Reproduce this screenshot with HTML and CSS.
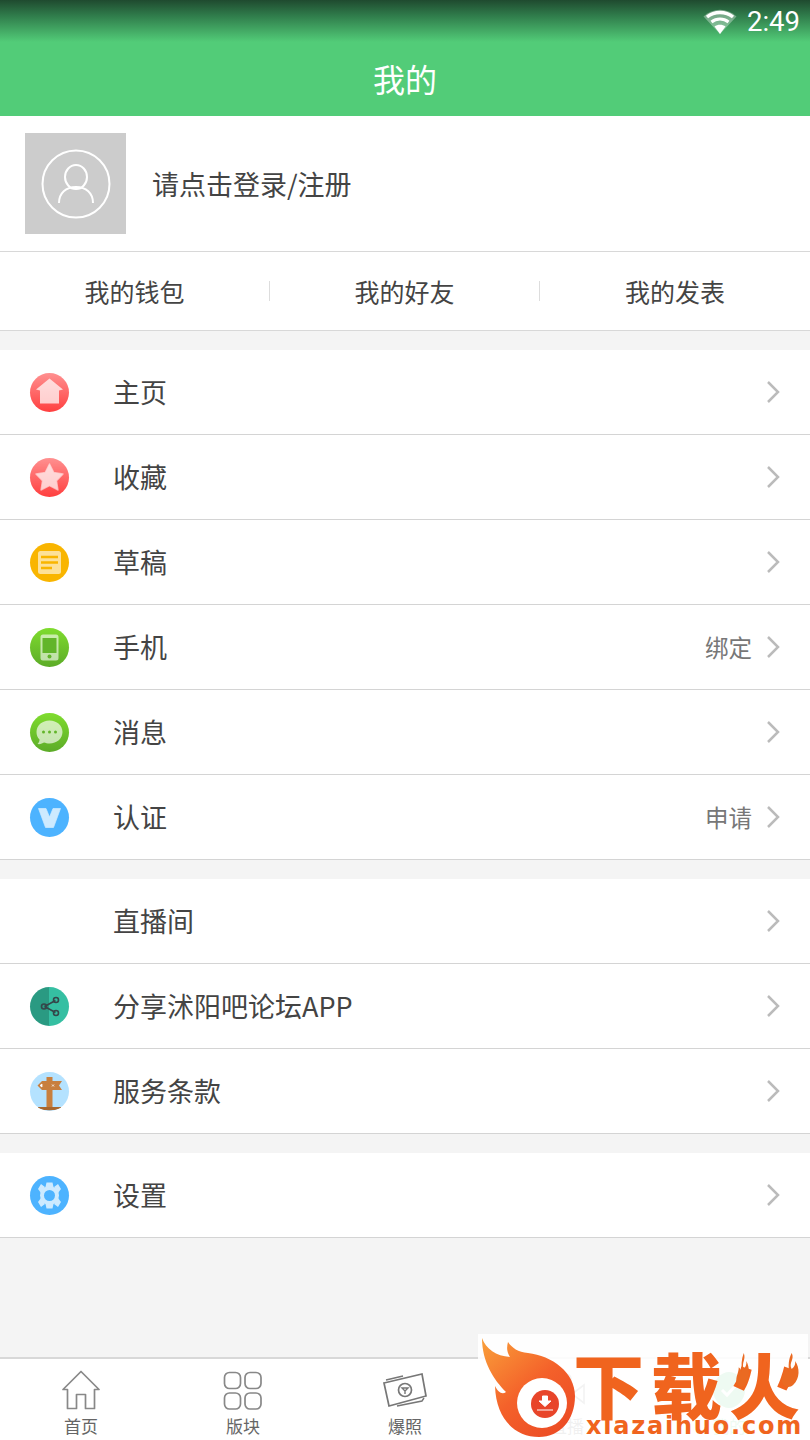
FILE: index.html
```html
<!DOCTYPE html>
<html lang="zh-CN">
<head>
    <meta charset="UTF-8">
    <meta name="viewport" content="width=device-width, initial-scale=1.0">
    <title>我的</title>
    <link rel="stylesheet" href="styles.css">
</head>
<body>
    <div class="app">
        <header class="header">
            <div class="status-bar">
                <svg class="wifi" width="34" height="26" viewBox="0 0 34 26">
                    <path d="M17 25 0.5 7.5C10-1.5 24-1.5 33.5 7.5Z" fill="#fff" opacity="0.35"/>
                    <path d="M4 8C11.500 2 22.500 2 30 8" fill="none" stroke="#fff" stroke-width="3.500"/>
                    <path d="M8.500 13C13.500 9 20.500 9 25.500 13" fill="none" stroke="#fff" stroke-width="3"/>
                    <path d="M17 25 11.500 17.500C14.500 15 19.500 15 22.500 17.500Z" fill="#fff"/>
                </svg>
                <span class="time">2:49</span>
            </div>
            <h1 class="title">我的</h1>
        </header>

        <section class="profile">
            <div class="avatar">
                <svg width="70" height="70" viewBox="0 0 70 70" fill="none" stroke="#fff" stroke-width="2">
                    <circle cx="35" cy="35" r="33.500"/>
                    <ellipse cx="35" cy="28" rx="11" ry="12"/>
                    <path d="M18 54C18 44 25 38 35 38S52 44 52 54"/>
                </svg>
            </div>
            <span class="login-text">请点击登录/注册</span>
        </section>

        <nav class="quick-links">
            <div class="quick-link">我的钱包</div>
            <div class="quick-link">我的好友</div>
            <div class="quick-link">我的发表</div>
        </nav>

        <ul class="menu">
            <li class="menu-row">
                <span class="menu-icon icon-red">
                    <svg width="39" height="39" viewBox="0 0 39 39"><path d="M19.500 5.500 33 16.500 29 17.500V30.500H10V17.500L6 16.500Z" fill="#fff" opacity="0.72"/></svg>
                </span>
                <span class="menu-label">主页</span>
                <svg class="chevron" width="14" height="24" viewBox="0 0 14 24"><path d="M2 2 12 12 2 22"/></svg>
            </li>
            <li class="menu-row">
                <span class="menu-icon icon-red">
                    <svg width="39" height="39" viewBox="0 0 39 39"><path d="M19.500 6 23.800 14.500 33 16 26.500 22.800 28 32 19.500 27.700 11 32 12.500 22.800 6 16 15.200 14.500Z" fill="#fff" opacity="0.72" stroke="#fff" stroke-width="1.500" stroke-linejoin="round" stroke-opacity="0.72"/></svg>
                </span>
                <span class="menu-label">收藏</span>
                <svg class="chevron" width="14" height="24" viewBox="0 0 14 24"><path d="M2 2 12 12 2 22"/></svg>
            </li>
            <li class="menu-row">
                <span class="menu-icon icon-yellow">
                    <svg width="39" height="39" viewBox="0 0 39 39"><rect x="8" y="8" width="23" height="23" rx="2.500" fill="#fff" opacity="0.6"/><path d="M11 14H28M11 19.500H28M11 25H22" stroke="#f9b500" stroke-width="2.500"/></svg>
                </span>
                <span class="menu-label">草稿</span>
                <svg class="chevron" width="14" height="24" viewBox="0 0 14 24"><path d="M2 2 12 12 2 22"/></svg>
            </li>
            <li class="menu-row">
                <span class="menu-icon icon-green">
                    <svg width="39" height="39" viewBox="0 0 39 39"><rect x="10.500" y="6.500" width="18" height="26" rx="2.500" fill="#fff" opacity="0.6"/><rect x="12.500" y="10" width="14" height="15" fill="#62b52a"/><circle cx="19.500" cy="28.500" r="2" fill="#62b52a"/></svg>
                </span>
                <span class="menu-label">手机</span>
                <span class="menu-note">绑定</span>
                <svg class="chevron" width="14" height="24" viewBox="0 0 14 24"><path d="M2 2 12 12 2 22"/></svg>
            </li>
            <li class="menu-row">
                <span class="menu-icon icon-green">
                    <svg width="39" height="39" viewBox="0 0 39 39"><path d="M19.500 7.500C27 7.500 32.500 12.500 32.500 19S27 30.500 19.500 30.500C17.500 30.500 15.500 30 14 29.500 12.500 30.500 10 31.500 7.500 31 9 29.500 9.500 28 9.500 26.500 7.500 24.500 6.500 22 6.500 19 6.500 12.500 12 7.500 19.500 7.500Z" fill="#fff" opacity="0.65"/><circle cx="13.500" cy="19" r="1.500" fill="#62b52a"/><circle cx="19.500" cy="19" r="1.500" fill="#62b52a"/><circle cx="25.500" cy="19" r="1.500" fill="#62b52a"/></svg>
                </span>
                <span class="menu-label">消息</span>
                <svg class="chevron" width="14" height="24" viewBox="0 0 14 24"><path d="M2 2 12 12 2 22"/></svg>
            </li>
            <li class="menu-row">
                <span class="menu-icon icon-blue">
                    <svg width="39" height="39" viewBox="0 0 39 39"><path d="M8.500 10.500H16L19.500 19 23 10.500H30.500L23.500 29.500H15.500Z" fill="#fff" opacity="0.72" stroke="#fff" stroke-width="1" stroke-linejoin="round" stroke-opacity="0.72"/></svg>
                </span>
                <span class="menu-label">认证</span>
                <span class="menu-note">申请</span>
                <svg class="chevron" width="14" height="24" viewBox="0 0 14 24"><path d="M2 2 12 12 2 22"/></svg>
            </li>
        </ul>

        <ul class="menu">
            <li class="menu-row">
                <span class="menu-icon"></span>
                <span class="menu-label">直播间</span>
                <svg class="chevron" width="14" height="24" viewBox="0 0 14 24"><path d="M2 2 12 12 2 22"/></svg>
            </li>
            <li class="menu-row">
                <span class="menu-icon icon-teal">
                    <svg width="39" height="39" viewBox="0 0 39 39" fill="none" stroke="#35474a" stroke-width="1.600"><path d="M14.500 19.500 25.500 13.500M14.500 19.500 25.500 25.500"/><circle cx="14" cy="19.500" r="2.500"/><circle cx="26" cy="13" r="2.500"/><circle cx="26" cy="26" r="2.500"/></svg>
                </span>
                <span class="menu-label">分享沭阳吧论坛APP</span>
                <svg class="chevron" width="14" height="24" viewBox="0 0 14 24"><path d="M2 2 12 12 2 22"/></svg>
            </li>
            <li class="menu-row">
                <span class="menu-icon icon-sky">
                    <svg width="39" height="39" viewBox="0 0 39 39"><path d="M8 35H31V36C27 39 12 39 8 36Z" fill="#a8672f"/><rect x="8" y="35" width="23" height="1.500" fill="#a8672f"/><rect x="16.500" y="5" width="6" height="30" fill="#c87f3e"/><path d="M12 9H32L29 13.500 32 18H12L7.500 13.500Z" fill="#c87f3e"/><path d="M12 12 10 13.500 12 15ZM22 12.500 24 14.500M24 12.500 22 14.500" fill="#fff" stroke="#fff" stroke-width="0.800"/></svg>
                </span>
                <span class="menu-label">服务条款</span>
                <svg class="chevron" width="14" height="24" viewBox="0 0 14 24"><path d="M2 2 12 12 2 22"/></svg>
            </li>
        </ul>

        <ul class="menu">
            <li class="menu-row">
                <span class="menu-icon icon-blue">
                    <svg width="39" height="39" viewBox="0 0 39 39">
                        <g fill="#fff" opacity="0.72">
                            <path d="M19.500 19.500m-9.500 0a9.500 9.500 0 1 0 19 0a9.500 9.500 0 1 0-19 0"/>
                            <path d="M16.500 6.500H22.500L23.500 11H15.500ZM16.500 32.500H22.500L23.500 28H15.500Z"/>
                            <path d="M8 13 11 8 15 11 11 17ZM31 13 28 8 24 11 28 17ZM8 26 11 31 15 28 11 22ZM31 26 28 31 24 28 28 22Z"/>
                        </g>
                        <circle cx="19.500" cy="19.500" r="5.500" fill="#4db3ff"/>
                    </svg>
                </span>
                <span class="menu-label">设置</span>
                <svg class="chevron" width="14" height="24" viewBox="0 0 14 24"><path d="M2 2 12 12 2 22"/></svg>
            </li>
        </ul>

        <div class="spacer"></div>

        <footer class="tab-bar">
            <div class="tab">
                <svg width="38" height="40" viewBox="0 0 38 40" fill="none" stroke="#888" stroke-width="1.700" stroke-linejoin="round"><path d="M1 19.500 19 1.500 37 19.500H32.500V38.500H23.500V24.500H14.500V38.500H5.500V19.500Z"/></svg>
                <span class="tab-label">首页</span>
            </div>
            <div class="tab">
                <svg width="40" height="40" viewBox="0 0 40 40" fill="none" stroke="#888" stroke-width="1.700"><rect x="1.500" y="2.500" width="16" height="16" rx="5"/><rect x="22" y="2.500" width="16" height="16" rx="5"/><rect x="1.500" y="23" width="16" height="16" rx="5"/><rect x="22" y="23" width="16" height="16" rx="5"/></svg>
                <span class="tab-label">版块</span>
            </div>
            <div class="tab">
                <svg width="44" height="40" viewBox="0 0 44 40" fill="none" stroke="#777" stroke-width="1.700"><path d="M1 13 39 4 43 26 6 36Z"/><path d="M3 10 20 6M41 28 39 31 14 36" stroke-width="1.400"/><circle cx="22" cy="20" r="6.500"/><path d="M19 18H25L22 21ZM22 21V24" stroke-width="1.400"/></svg>
                <span class="tab-label">爆照</span>
            </div>
            <div class="tab">
                <svg width="40" height="40" viewBox="0 0 40 40" fill="none" stroke="#888" stroke-width="1.700"><circle cx="9" cy="9" r="5"/><circle cx="19" cy="9" r="5"/><rect x="3" y="14" width="22" height="20" rx="3"/><path d="M25 24 37 15V33Z"/></svg>
                <span class="tab-label">直播</span>
            </div>
            <div class="tab tab-active">
                <svg width="40" height="40" viewBox="0 0 40 40"><path d="M20 2C28 2 36 10 36 20 36 30 28 38 20 38 12 38 4 30 4 20 4 10 12 2 20 2Z" fill="#52cc78"/><path d="M13 20 18 25 28 14" fill="none" stroke="#fff" stroke-width="3"/></svg>
                <span class="tab-label">我的</span>
            </div>
        </footer>

        <div class="watermark">
            <svg class="wm-flame" width="100" height="106" viewBox="0 0 100 106">
                <defs>
                    <linearGradient id="flame" x1="0" y1="0" x2="0.8" y2="1">
                        <stop offset="0" stop-color="#f9a03a"/>
                        <stop offset="0.55" stop-color="#f4612a"/>
                        <stop offset="1" stop-color="#ec4c25"/>
                    </linearGradient>
                </defs>
                <path d="M4 4C8 15 18 22 32 23 28 17 29 12 30 8 34 14 40 18 50 19 74 22 97 38 97 62 97 86 82 103 61 103 38 103 18 86 17 52 20 58 24 61 28 58 16 46 4 28 4 4Z" fill="url(#flame)"/>
                <circle cx="64" cy="69" r="25" fill="#fff"/>
                <circle cx="67" cy="70" r="14" fill="#e8452a"/>
                <path d="M64.500 62H69.500V67H73L67 72.500 61 67H64.500ZM59 76H75" fill="#fff" stroke="#fff" stroke-width="1"/>
            </svg>
            <div class="wm-text">
                <div class="wm-name">下载火</div>
                <div class="wm-url">xiazaihuo.com</div>
            </div>
            <svg class="wm-spark wm-spark-one" width="15" height="35" viewBox="0 0 24 44" preserveAspectRatio="none"><path d="M14 0C18 8 10 12 14 20 17 18 19 14 18 10 24 18 24 32 16 40 12 44 6 44 3 38 0 30 6 26 6 18 9 20 10 22 11 24 10 16 10 8 14 0Z" fill="#ea6a22"/></svg>
            <svg class="wm-spark wm-spark-two" width="20" height="35" viewBox="0 0 24 44" preserveAspectRatio="none"><path d="M14 0C18 8 10 12 14 20 17 18 19 14 18 10 24 18 24 32 16 40 12 44 6 44 3 38 0 30 6 26 6 18 9 20 10 22 11 24 10 16 10 8 14 0Z" fill="#ea6a22"/></svg>
        </div>
    </div>
</body>
</html>
```

FILE: styles.css
```css
* {
    box-sizing: border-box;
}

html, body {
    margin: 0;
    padding: 0;
}

body {
    font-family: "Noto Sans CJK SC", "Noto Sans", sans-serif;
    background: #f4f4f4;
    color: #444;
}

.app {
    position: relative;
    width: 810px;
    height: 1440px;
    display: flex;
    flex-direction: column;
    overflow: hidden;
}

/* Header */
.header {
    height: 116px;
    flex-shrink: 0;
    background: linear-gradient(#1f4a2f 0, #2f7a4a 15px, #52cc78 42px);
    color: #fff;
}

.status-bar {
    height: 43px;
    padding-right: 10px;
    display: flex;
    justify-content: flex-end;
    align-items: center;
    gap: 10px;
}

.time {
    font-family: Roboto, sans-serif;
    font-size: 27.500px;
}

.title {
    margin: 14px 0 0;
    text-align: center;
    font-size: 32px;
    font-weight: 400;
    line-height: 42px;
}

/* Profile */
.profile {
    height: 136px;
    flex-shrink: 0;
    padding-left: 25px;
    display: flex;
    align-items: center;
    gap: 26px;
    background: #fff;
    border-bottom: 1px solid #d8d8d8;
}

.avatar {
    width: 101px;
    height: 101px;
    background: #ccc;
    display: flex;
    align-items: center;
    justify-content: center;
}

.login-text {
    font-size: 27px;
}

.quick-links {
    height: 79px;
    flex-shrink: 0;
    display: flex;
    align-items: center;
    background: #fff;
    border-bottom: 1px solid #d8d8d8;
}

.quick-link {
    width: 270px;
    height: 20px;
    display: flex;
    align-items: center;
    justify-content: center;
    font-size: 25px;
    border-right: 1px solid #ddd;
}

.quick-link:last-child {
    border-right: none;
}

/* Menu lists */
.menu {
    margin: 19px 0 0;
    padding: 0;
    list-style: none;
    flex-shrink: 0;
}

.menu-row {
    height: 85px;
    padding: 0 30px;
    display: flex;
    align-items: center;
    background: #fff;
    border-bottom: 1px solid #d4d4d4;
}

.menu-icon {
    width: 39px;
    height: 39px;
    margin-right: 44px;
    border-radius: 50%;
    overflow: hidden;
    flex-shrink: 0;
}

.menu-icon svg {
    display: block;
}

.icon-red {
    background: linear-gradient(#ff9090, #ff3f3f);
}

.icon-yellow {
    background: #f9b500;
}

.icon-green {
    background: linear-gradient(#7fdc2e, #5cab28);
}

.icon-blue {
    background: #4db3ff;
}

.icon-teal {
    background: linear-gradient(90deg, #2a9a82 50%, #35bfa2 50%);
}

.icon-sky {
    background: #b4e2ff;
}

.menu-label {
    flex: 1;
    margin-top: -1px;
    font-size: 27px;
}

.menu-note {
    margin-right: 14px;
    font-size: 23.500px;
    color: #777;
}

.chevron {
    fill: none;
    stroke: #bbb;
    stroke-width: 2.500;
}

.spacer {
    flex: 1;
}

/* Bottom tabs */
.tab-bar {
    height: 83px;
    flex-shrink: 0;
    display: flex;
    background: #fff;
    border-top: 2px solid #d8d8d8;
}

.tab {
    flex: 1;
    padding-top: 11px;
    display: flex;
    flex-direction: column;
    align-items: center;
    gap: 4px;
}

.tab-label {
    font-size: 17px;
    line-height: 24px;
    color: #666;
}

.tab-active .tab-label {
    color: #52cc78;
}

/* Download site logo stamped over the corner */
.watermark {
    position: absolute;
    left: 478px;
    top: 1334px;
    width: 330px;
    height: 106px;
    background: rgba(255, 255, 255, 0.9);
}

.wm-flame {
    position: absolute;
    left: 0;
    top: 0;
}

.wm-text {
    position: absolute;
    left: 94px;
    top: 15px;
    width: 236px;
    color: #f0641e;
    text-align: center;
    white-space: nowrap;
}

.wm-name {
    font-size: 71px;
    font-weight: 900;
    line-height: 66px;
    letter-spacing: 7px;
}

.wm-url {
    font-family: "DejaVu Sans", sans-serif;
    font-size: 24px;
    font-weight: 700;
    line-height: 22px;
    letter-spacing: 1.800px;
    padding-left: 9px;
}

.wm-spark {
    position: absolute;
    top: 19px;
}

.wm-spark-one {
    left: 257px;
}

.wm-spark-two {
    left: 302px;
}
```
